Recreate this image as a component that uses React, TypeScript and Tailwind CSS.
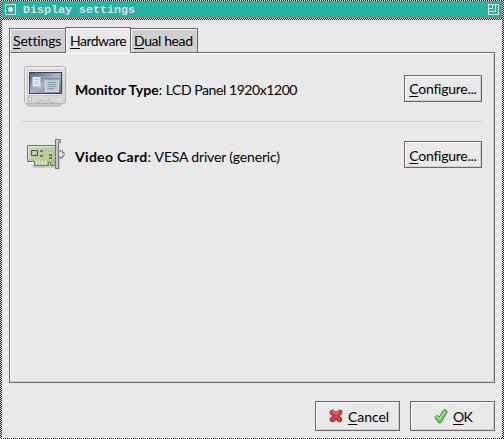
import type { ReactNode } from "react";

const checker =
  "bg-[conic-gradient(#000_25%,#fff_0_50%,#000_0_75%,#fff_0)] bg-[length:2px_2px]";

function MonitorIcon() {
  return (
    <svg width="44" height="42" viewBox="0 0 44 42" className="block">
      <defs>
        <linearGradient id="scr" x1="0" y1="0" x2="1" y2="1">
          <stop offset="0" stopColor="#50616f" />
          <stop offset=".5" stopColor="#a9b5be" />
          <stop offset="1" stopColor="#667784" />
        </linearGradient>
        <linearGradient id="caseFill" x1="0" y1="0" x2="0" y2="1">
          <stop offset="0" stopColor="#e2e2e2" />
          <stop offset="1" stopColor="#d3d3d3" />
        </linearGradient>
      </defs>
      <path d="M4 35h36v3l-2 2H6l-2-2z" fill="#cdcdcd" stroke="#b0b0b0" />
      <rect x="2.5" y=".500" width="41" height="37" rx="2" fill="url(#caseFill)" stroke="#b2b2b2" />
      <path d="M3.500 36V2.500q0-1 1-1H42" fill="none" stroke="#f4f4f4" />
      <rect x="5.500" y="4.500" width="35" height="25" rx="1" fill="#f0f0f0" stroke="#c6c6c6" />
      <rect x="7.500" y="6.500" width="32" height="21" fill="url(#scr)" stroke="#3c444b" />
      <path d="M10 7v20M14 7v20M18 7v20M22 7v20M26 7v20M30 7v20M34 7v20M8 11h31M8 16h31M8 21h31" stroke="#fff" strokeOpacity=".07" />
      <rect x="10.500" y="10.500" width="8" height="10" fill="#e0e8ee" />
      <path d="M10.500 10.500h8" stroke="#6a92b4" />
      <path d="M12.500 13.500h4M12.500 15.500h4M12.500 17.500h4" stroke="#b3c2ce" />
      <rect x="23.500" y="13.500" width="13" height="12" fill="#bac9d4" stroke="#d4dde3" />
      <path d="M23 13h14" stroke="#4a7299" />
      <path d="M26 16.500h8M26 18.500h8M26 20.500h8M26 22.500h6" stroke="#879dac" />
      <rect x="6.500" y="31.500" width="3" height="3" fill="#f2f2f2" stroke="#b8b8b8" />
      <path d="M15 36.500h3M21 36.500h4M28 36.500h3M18 34.500h2M25 34.500h2" stroke="#b4b4b4" />
      <path d="M36 33.500h4" stroke="#e9e6c0" strokeWidth="2" />
    </svg>
  );
}

function CardIcon() {
  return (
    <svg width="44" height="36" viewBox="0 0 44 36" className="block">
      <defs>
        <linearGradient id="board" x1="0" y1="0" x2="1" y2="1">
          <stop offset="0" stopColor="#c8ddc0" />
          <stop offset="1" stopColor="#98bf8d" />
        </linearGradient>
      </defs>
      <path d="M8 28h24v3H12zM37 20h5l-4 3v10h-2z" fill="#b5b5b5" opacity=".6" />
      <path d="M5.500 8.500h28v20h-5v-3h-2v3h-14v-4h-7z" fill="url(#board)" stroke="#6b7668" />
      <path d="M6.500 22v-12.500h26" stroke="#dcebd6" fill="none" />
      <path d="M18 19.500h11M22 15.500h8M7 20.500h9M25 12.500h6M17 21.500h14" stroke="#c9d48f" />
      <rect x="9.500" y="13.500" width="6" height="5" fill="#b8beb6" stroke="#505850" />
      <path d="M11 17.500l3-3" stroke="#eee" />
      <path d="M18 14h3M18 19h3M27 18h3M27 21h3" stroke="#6d7a6b" strokeWidth="2" />
      <path d="M14.500 23.500v4.500M17.500 23.500v4.500M20.500 23.500v4.500M23.500 23.500v4.500" stroke="#f2eaa8" strokeWidth="1.600" />
      <path d="M33.500 2.500h5v3h-2v26h-3z" fill="#c6c6c6" stroke="#737373" />
      <path d="M36.500 14.500h2v-1h2v2h1.500v3.500h-1.500v2h-2v-1h-2z" fill="#dedede" stroke="#777" />
    </svg>
  );
}

function CancelIcon() {
  return (
    <svg width="14" height="14" viewBox="0 0 14 14" className="block">
      <path
        d="M3.500 1L7 3.500 10.500 1l2.500 1-.500 3-2.300 2 2.600 2.500-.500 2.500-2.300 1L7 10.500 4 13l-2.500-1-.500-2.500L3.800 7 1 4.500l.5-2.500z"
        fill="#d93c3c"
        stroke="#7b3434"
        strokeWidth="1"
        strokeLinejoin="round"
      />
      <path d="M2.700 3.300L4 2.300l3 2.700 3.400-2.700" fill="none" stroke="#f28f8f" />
    </svg>
  );
}

function OkIcon() {
  return (
    <svg width="14" height="15" viewBox="0 0 14 15" className="block">
      <path
        d="M.800 8.500L3 6.300l2.200 2L9.500 1.200l1.700-.700 2.100 2.100L7 13.500 5 14z"
        fill="#5ddb4a"
        stroke="#56735a"
        strokeLinejoin="round"
      />
      <path d="M2 8.300l1-.6L5.600 10l5.200-7.700" fill="none" stroke="#c6f6be" />
    </svg>
  );
}

function Mnemonic({ text }: { text: string }) {
  return (
    <>
      <span className="underline decoration-1 underline-offset-[2px] [text-decoration-skip-ink:none]">
        {text[0]}
      </span>
      {text.slice(1)}
    </>
  );
}

function Button({ className, children }: { className: string; children: ReactNode }) {
  return (
    <button
      className={`flex shrink-0 items-center justify-center border border-[#686868] bg-[#e9e9e9] shadow-[inset_1px_1px_0_#fff,inset_-1px_-1px_0_#cfcfcf] ${className}`}
    >
      {children}
    </button>
  );
}

export default function App() {
  return (
    <div
      className={`flex h-[439px] w-[504px] flex-col px-[2px] py-px font-[Lato,sans-serif] text-[14px] leading-[15px] text-black ${checker}`}
    >
      <header className="flex h-[17px] shrink-0 items-center bg-[#29b1a3] px-[3px]">
        <svg width="11" height="11" viewBox="0 0 11 11" shapeRendering="crispEdges">
          <path d="M.5.5h10v10H.5z" fill="none" stroke="#dfdfdf" />
          <path d="M4 3h3v1h1v3H7v1H4V7H3V4h1z" fill="#dfdfdf" />
        </svg>
        <h1 className="ml-[7px] flex-1 pt-[2px] font-['Liberation_Mono',monospace] text-[11.670px] leading-[15px] font-bold whitespace-pre text-[#dfdfdf]">
          Display settings
        </h1>
        <svg width="11" height="11" viewBox="0 0 11 11" shapeRendering="crispEdges">
          <path d="M.5.5h10v10H.5zM7.500 1v6.500H1M4.500 1v3.500H1" fill="none" stroke="#dfdfdf" />
        </svg>
      </header>
      <main className="mt-[2px] flex min-h-0 flex-1 flex-col bg-[#e9e9e9] px-[7px] pt-[7px] pb-[7px]">
        <nav className="relative z-10 -mb-px flex h-[26px] shrink-0 items-end">
          <div className="flex h-[25px] w-[56px] items-center border border-r-0 border-[#686868] bg-[#d0d0d0] pl-[3px] tracking-[-0.150px] shadow-[inset_1px_1px_0_#fff]">
            <span><Mnemonic text="Settings" /></span>
          </div>
          <div className="flex h-[26px] w-[66px] items-center border border-b-0 border-[#686868] bg-[#e9e9e9] pl-[4px] tracking-[-0.500px] shadow-[inset_1px_1px_0_#fff]">
            <span><Mnemonic text="Hardware" /></span>
          </div>
          <div className="flex h-[25px] w-[67px] items-center border border-l-0 border-[#686868] bg-[#d0d0d0] pl-[3px] tracking-[-0.400px] shadow-[inset_1px_1px_0_#fff]">
            <span><Mnemonic text="Dual head" /></span>
          </div>
        </nav>
        <section className="flex h-[331px] shrink-0 flex-col border border-[#686868] px-[12px] pt-[13px] shadow-[inset_1px_1px_0_#fff,inset_-1px_-1px_0_#cfcfcf]">
          <div className="flex h-[42px] items-center">
            <MonitorIcon />
            <p className="ml-[9px] flex-1 pt-[5px] whitespace-pre">
              <b>Monitor Type</b>: <span className="tracking-[-0.430px]">LCD Panel 1920x1200</span>
            </p>
            <Button className="mt-[2px] h-[27px] w-[78px] pt-px tracking-[-0.250px]">
              <span><Mnemonic text="Configure..." /></span>
            </Button>
          </div>
          <hr className="mt-[13px] border-[#cecece]" />
          <div className="mt-[14px] flex h-[38px] items-center">
            <CardIcon />
            <p className="ml-[9px] flex-1 pt-[2px] whitespace-pre">
              <b className="tracking-[0.300px]">Video Card</b>: <span className="tracking-[-0.170px]">VESA driver (generic)</span>
            </p>
            <Button className="-mt-px h-[27px] w-[78px] pt-px tracking-[-0.250px]">
              <span><Mnemonic text="Configure..." /></span>
            </Button>
          </div>
        </section>
        <footer className="mt-[18px] flex justify-end gap-[10px]">
          <Button className="h-[30px] w-[85px] gap-[5px] pl-[3px]">
            <CancelIcon />
            <span className="tracking-[-0.100px]"><Mnemonic text="Cancel" /></span>
          </Button>
          <Button className="h-[30px] w-[85px] gap-[5px] pl-px">
            <OkIcon />
            <span className="tracking-[-0.800px]"><Mnemonic text="OK" /></span>
          </Button>
        </footer>
      </main>
    </div>
  );
}
